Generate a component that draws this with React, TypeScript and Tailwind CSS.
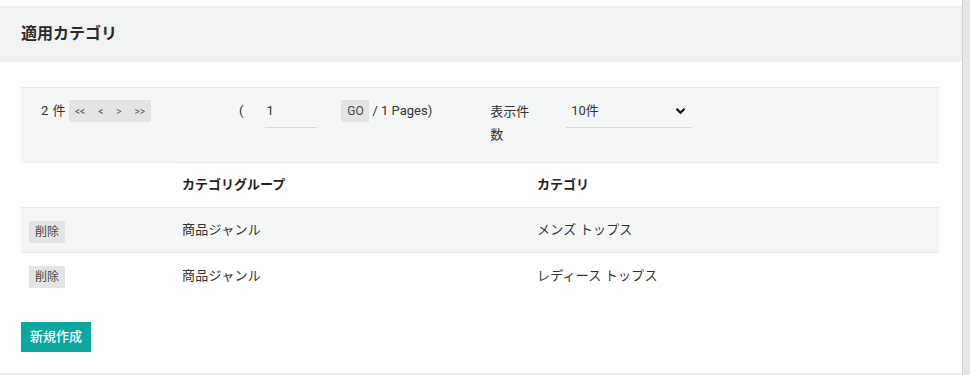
import React from "react";

const rows = [
  { group: "商品ジャンル", category: "メンズ トップス" },
  { group: "商品ジャンル", category: "レディース トップス" },
];

const FONT = "font-['Roboto','Noto_Sans_CJK_JP',sans-serif]";

export default function App() {
  return (
    <div className={`flex h-[375px] w-full bg-white text-[13px] text-[#333] ${FONT}`}>
      <div className="flex h-full w-[962px] flex-col border-b-2 border-[#efefef] pt-[6px]">
        <div className="flex h-[56px] items-center bg-[#f1f3f2] px-[21px]">
          <h2 className="text-[16px] font-bold text-[#2a2a2a]">適用カテゴリ</h2>
        </div>

        <div className="px-[21px] pt-[25px]">
          {/* pager */}
          <div className="flex h-[75px] w-[918px] items-start border-t border-[#e8eaea] bg-[#f5f7f7] pl-[20px] pt-[12px]">
            <span className="leading-[22px] tracking-[0.5px]">2 件</span>
            <div className="ml-[3px] flex h-[22px] w-[82px] items-center justify-between bg-[#e4e4e4] px-[6px] text-[10px] text-[#555]">
              <span>&lt;&lt;</span>
              <span>&lt;</span>
              <span>&gt;</span>
              <span>&gt;&gt;</span>
            </div>
            <span className="ml-[88px] leading-[22px]">(</span>
            <div className="ml-[22px] h-[28px] w-[52px] border-b border-[#d9d9d9] pl-[1px] leading-[22px]">1</div>
            <button className="ml-[24px] h-[22px] w-[28px] bg-[#e4e4e4] text-[12px] leading-[22px] text-[#444]">GO</button>
            <span className="ml-[3px] leading-[22px]">/ 1 Pages)</span>
            <div className="ml-[58px] w-[42px] leading-[23px]">表示件 数</div>
            <div className="ml-[34px] flex h-[28px] w-[126px] items-start justify-between border-b border-[#d9d9d9] pl-[5px] pr-[6px] leading-[22px]">
              <span>10件</span>
              <svg className="mt-[7px]" width="11" height="8" viewBox="0 0 11 8">
                <path d="M1.5 1.8 L5.5 5.8 L9.5 1.8" fill="none" stroke="#111" strokeWidth="2.2" />
              </svg>
            </div>
          </div>

          {/* table */}
          <table className="w-[918px] table-fixed border-collapse">
            <colgroup>
              <col className="w-[153px]" />
              <col className="w-[355px]" />
              <col />
            </colgroup>
            <thead>
              <tr className="h-[45px]">
                <th className="border-t border-[#f0f2f2]" />
                <th className="border-t border-[#e6e8e8] px-[8px] text-left font-bold text-[#222]">カテゴリグループ</th>
                <th className="border-t border-[#e6e8e8] px-[8px] text-left font-bold text-[#222]">カテゴリ</th>
              </tr>
            </thead>
            <tbody>
              {rows.map((r, i) => (
                <tr key={i} className={`h-[45px] border-t border-[#e9ebeb] ${i === 0 ? "bg-[#f5f7f7]" : "bg-white"}`}>
                  <td className="px-[8px]">
                    <button className="mt-[4px] h-[22px] w-[36px] bg-[#e4e4e4] text-[12px] text-[#444]">削除</button>
                  </td>
                  <td className="px-[8px] tracking-[0.3px]">{r.group}</td>
                  <td className="px-[8px] tracking-[0.2px]">{r.category}</td>
                </tr>
              ))}
            </tbody>
          </table>

          <button className="mt-[24px] h-[30px] w-[70px] bg-[#0aa89e] text-[13px] font-medium text-white">新規作成</button>
        </div>
      </div>
      <div className="h-full w-px bg-[#d0d0d0]" />
      <div className="h-full flex-1 bg-[#e6e6e6]" />
    </div>
  );
}
